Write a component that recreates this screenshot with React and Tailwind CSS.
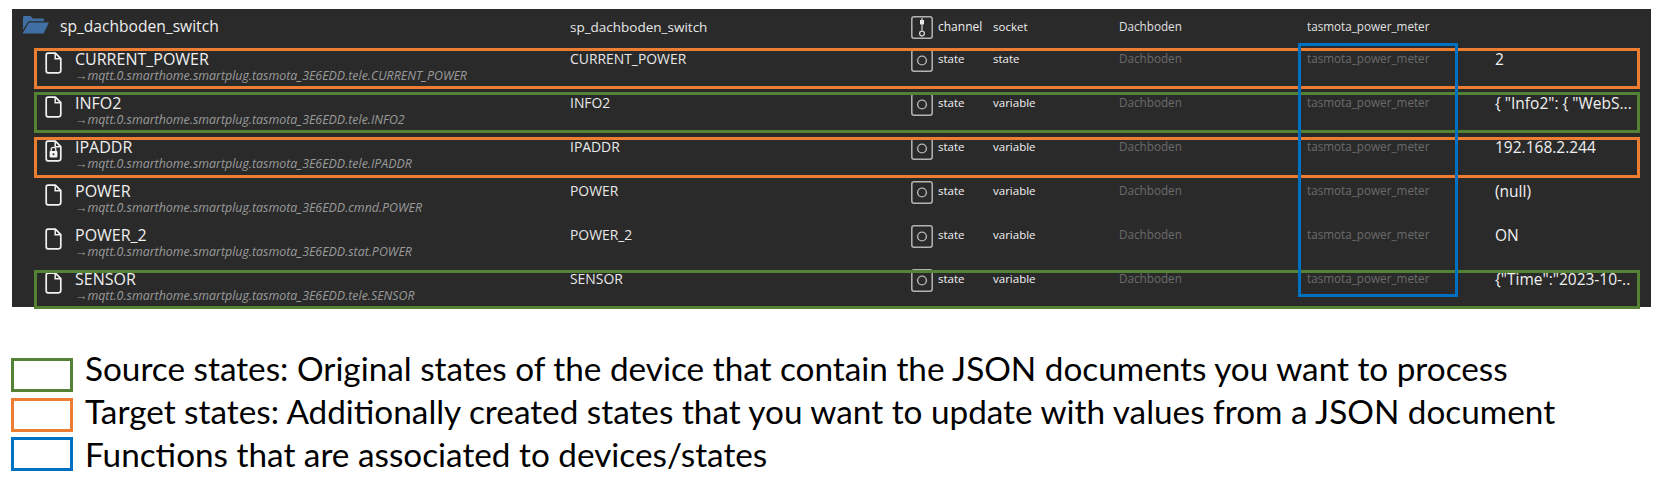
const GRID = "grid grid-cols-[558px_341px_82px_126px_188px_188px_1fr]";

function FileIcon({ lock }) {
  return (
    <svg width="17" height="22" viewBox="0 0 17 22" fill="none" className="shrink-0">
      <path d="M3 1.2H10.4L15.8 6.6V18.6C15.8 19.9 14.9 20.8 13.6 20.8H3C1.9 20.8 1.2 19.9 1.2 18.8V3.2C1.2 2 1.9 1.2 3 1.2Z" stroke="#f2f2f2" strokeWidth="1.7" />
      <path d="M10.2 1.4V6.8H15.6" stroke="#f2f2f2" strokeWidth="1.5" />
      {lock && (
        <>
          <rect x="4.6" y="11" width="7.8" height="6.4" rx="0.8" fill="#f2f2f2" />
          <path d="M6.2 11V9.3C6.2 6.8 10.8 6.8 10.8 9.3V11" stroke="#f2f2f2" strokeWidth="1.3" />
          <circle cx="8.5" cy="14.2" r="1" fill="#2a2a2a" />
        </>
      )}
    </svg>
  );
}

function FolderIcon() {
  return (
    <svg width="27" height="18" viewBox="0 0 27 18" className="shrink-0 -mt-[4px]">
      <path d="M1 1.5C1 .7 1.6 0 2.4 0H8.5L11 2.6H20.5C21.3 2.6 22 3.2 22 4V5.2H6.4L1 14Z" fill="#3f6fa3" />
      <path d="M6.8 6.4H27L21.6 17.4H.6Z" fill="#3f6fa3" />
    </svg>
  );
}

function TypeIcon({ channel }) {
  return (
    <svg width="22" height="23" viewBox="0 0 22 23" fill="none" className="shrink-0">
      <rect x="0.8" y="0.8" width="20.4" height="21.4" rx="2.2" stroke="#b4b4b4" strokeWidth="1.5" />
      {channel ? (
        <>
          <rect x="9" y="4" width="4" height="4.4" fill="#f2f2f2" />
          <path d="M11 2V14.5" stroke="#d8d8d8" strokeWidth="1.2" />
          <circle cx="11" cy="17.6" r="2.4" stroke="#d0d0d0" strokeWidth="1.3" />
        </>
      ) : (
        <circle cx="11" cy="11.5" r="4.4" stroke="#b4b4b4" strokeWidth="1.4" />
      )}
    </svg>
  );
}

function Row({ name, path, role, value, lock }) {
  return (
    <div className={`${GRID} h-[44px] items-start`}>
      <div className="flex pl-[33px]">
        <div className="mt-[4px] w-[30px]"><FileIcon lock={lock} /></div>
        <div className="pt-[3px]">
          <div className="text-[16px] leading-[17px] text-[#f0f0f0]">{name}</div>
          <div className="text-[12.4px] leading-[16px] italic text-[#9a9a9a] whitespace-nowrap">{path}</div>
        </div>
      </div>
      <div className="h-[22px] flex items-center text-[13.9px] text-[#e8e8e8]">{name}</div>
      <div className="h-[24px] flex items-center gap-[5px] text-[11.5px] text-[#f0f0f0]">
        <TypeIcon />
        <span className="mb-[2px]">state</span>
      </div>
      <div className="h-[22px] flex items-center text-[11.5px] text-[#f0f0f0]">{role}</div>
      <div className="h-[22px] flex items-center text-[11.7px] text-[#6b6b6b]">Dachboden</div>
      <div className="h-[22px] flex items-center text-[11.7px] text-[#6b6b6b]">tasmota_power_meter</div>
      <div className="h-[24px] flex items-center">
        <span className="text-[15.5px] text-[#f0f0f0] whitespace-nowrap">{value}</span>
      </div>
    </div>
  );
}

const ROWS = [
  { name: "CURRENT_POWER", path: "→mqtt.0.smarthome.smartplug.tasmota_3E6EDD.tele.CURRENT_POWER", role: "state", value: "2" },
  { name: "INFO2", path: "→mqtt.0.smarthome.smartplug.tasmota_3E6EDD.tele.INFO2", role: "variable", value: '{ "Info2": { "WebS...' },
  { name: "IPADDR", path: "→mqtt.0.smarthome.smartplug.tasmota_3E6EDD.tele.IPADDR", role: "variable", value: "192.168.2.244", lock: true },
  { name: "POWER", path: "→mqtt.0.smarthome.smartplug.tasmota_3E6EDD.cmnd.POWER", role: "variable", value: "(null)" },
  { name: "POWER_2", path: "→mqtt.0.smarthome.smartplug.tasmota_3E6EDD.stat.POWER", role: "variable", value: "ON" },
  { name: "SENSOR", path: "→mqtt.0.smarthome.smartplug.tasmota_3E6EDD.tele.SENSOR", role: "variable", value: '{"Time":"2023-10-..' },
];

const LEGEND = [
  { box: "border-[#548235]", text: "Source states: Original states of the device that contain the JSON documents you want to process" },
  { box: "border-[#ed7d31]", text: "Target states: Additionally created states that you want to update with values from a JSON document" },
  { box: "border-[#0070c0]", text: "Functions that are associated to devices/states" },
];

export default function App() {
  return (
    <div className="relative w-[1661px] h-[498px] bg-white overflow-hidden pt-[9px] font-['Open_Sans','Noto_Sans',sans-serif]">
      <div className="mr-[10px] ml-[12px] h-[298px] bg-[#2a2a2a] overflow-hidden">
        <div className={`${GRID} h-[39px] items-start pt-[7px]`}>
          <div className="flex items-center h-[22px] pl-[10px] gap-[11px]">
            <FolderIcon />
            <span className="text-[15.6px] text-[#eeeeee]">sp_dachboden_switch</span>
          </div>
          <div className="h-[22px] flex items-center text-[13.5px] text-[#e8e8e8]">sp_dachboden_switch</div>
          <div className="h-[22px] flex items-center gap-[5px] text-[12px] text-[#f0f0f0]">
            <TypeIcon channel />
            <span>channel</span>
          </div>
          <div className="h-[22px] flex items-center text-[11.5px] text-[#f0f0f0]">socket</div>
          <div className="h-[22px] flex items-center text-[11.7px] text-[#e0e0e0]">Dachboden</div>
          <div className="h-[22px] flex items-center text-[11.7px] text-[#e0e0e0]">tasmota_power_meter</div>
          <div />
        </div>
        {ROWS.map((r) => (
          <Row key={r.name} {...r} />
        ))}
      </div>

      <div className="mt-[51px] ml-[11px] flex gap-[12px] font-['Lato','Open_Sans',sans-serif]">
        <div className="flex flex-col gap-[5.5px] shrink-0">
          {LEGEND.map((l) => (
            <div key={l.box} className={`w-[62px] h-[34px] border-[3px] ${l.box}`} />
          ))}
        </div>
        <div className="-mt-[11px] flex flex-col">
          {LEGEND.map((l) => (
            <span key={l.text} className="text-[33.3px] leading-[43px] text-black whitespace-nowrap">{l.text}</span>
          ))}
        </div>
      </div>

      <div className="absolute left-[34px] top-[48px] w-[1606px] h-[41px] border-[3px] border-[#ed7d31]" />
      <div className="absolute left-[34px] top-[92px] w-[1606px] h-[41px] border-[3px] border-[#548235]" />
      <div className="absolute left-[34px] top-[137px] w-[1606px] h-[41px] border-[3px] border-[#ed7d31]" />
      <div className="absolute left-[34px] top-[270px] w-[1606px] h-[39px] border-[3px] border-[#548235]" />
      <div className="absolute left-[1298px] top-[43px] w-[160px] h-[254px] border-[3px] border-[#0070c0]" />
    </div>
  );
}
